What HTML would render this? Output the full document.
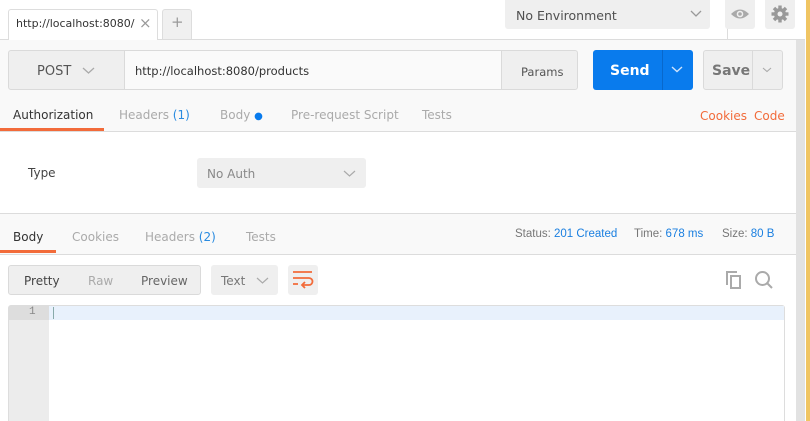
<!DOCTYPE html>
<html><head><style>
*{box-sizing:border-box;margin:0;padding:0}
html,body{width:810px;height:421px;overflow:hidden}
body{background:#fff;font-family:"DejaVu Sans","Liberation Sans",sans-serif;font-size:12px;color:#505050;position:relative}
.a{position:absolute}
.t{position:absolute;white-space:nowrap}
</style></head><body>
<div class="a" style="left:0;top:0;width:805px;height:40px;background:#fff;border-bottom:1px solid #dcdcdc"></div>
<div class="a" style="left:8px;top:9px;width:150px;height:32px;background:#fff;border:1px solid #ddd;border-bottom:none;border-radius:3px 3px 0 0"></div>
<div class="t" style="left:16px;top:17px;font-size:11px;color:#333">http://localhost:8080/</div>
<div class="t" style="left:139px;top:14px;font-size:15px;color:#999">×</div>
<div class="a" style="left:162px;top:9px;width:30px;height:30px;background:#f0f0f0;border:1px solid #ddd;border-bottom:none;border-radius:3px 3px 0 0"></div>
<div class="t" style="left:171px;top:13px;font-size:15px;color:#999">+</div>
<div class="a" style="left:727px;top:0;width:1px;height:40px;background:#ddd"></div>
<div class="a" style="left:505px;top:0;width:205px;height:29px;background:#efefef;border-radius:0 0 3px 3px"></div>
<div class="t" style="left:516px;top:8px;font-size:12.5px;color:#505050">No Environment</div>
<svg class="a" style="left:690px;top:10px" width="12" height="8"><path d="M1 1l5 5 5-5" fill="none" stroke="#999" stroke-width="1.3"/></svg>
<div class="a" style="left:725px;top:0;width:30px;height:29px;background:#efefef;border-radius:0 0 3px 3px"></div>
<svg class="a" style="left:730px;top:7px" width="20" height="14"><path d="M1 7Q10-2 19 7Q10 16 1 7z" fill="#aaa"/><circle cx="10" cy="7" r="3.3" fill="#efefef"/><circle cx="10" cy="7" r="1.8" fill="#aaa"/></svg>
<div class="a" style="left:765px;top:0;width:30px;height:29px;background:#efefef;border-radius:0 0 3px 3px"></div>
<svg class="a" style="left:770px;top:4px" width="20" height="20" viewBox="0 0 20 20"><g fill="#999"><circle cx="10" cy="10" r="6"/><rect x="8.3" y="1.5" width="3.4" height="17"/><rect x="1.5" y="8.3" width="17" height="3.4"/><rect x="8.3" y="1.5" width="3.4" height="17" transform="rotate(45 10 10)"/><rect x="8.3" y="1.5" width="3.4" height="17" transform="rotate(-45 10 10)"/></g><circle cx="10" cy="10" r="2.5" fill="#efefef"/></svg>
<div class="a" style="left:805px;top:0;width:5px;height:421px;background:#fff"></div>
<div class="a" style="left:806px;top:0;width:4px;height:421px;background:#f0c563"></div>
<div class="a" style="left:796px;top:40px;width:9px;height:381px;background:#e2e2e2"></div>
<div class="a" style="left:0;top:40px;width:796px;height:92px;background:#f9f9f9;border-bottom:1px solid #dcdcdc"></div>
<div class="a" style="left:8px;top:50px;width:570px;height:40px;background:#efefef;border:1px solid #dadada;border-radius:3px"></div>
<div class="a" style="left:124px;top:51px;width:1px;height:38px;background:#dadada"></div>
<div class="a" style="left:501px;top:51px;width:1px;height:38px;background:#dadada"></div>
<div class="t" style="left:37px;top:64px;font-size:13px;color:#555">POST</div>
<svg class="a" style="left:82px;top:67px" width="13" height="8"><path d="M1 1l5.5 5 5.5-5" fill="none" stroke="#aaa" stroke-width="1.3"/></svg>
<div class="a" style="left:125px;top:51px;width:376px;height:38px;background:#fafafa"></div>
<div class="t" style="left:135px;top:64px;font-size:11.5px;color:#333">http://localhost:8080/products</div>
<div class="t" style="left:521px;top:65px;font-size:11.5px;color:#555">Params</div>
<div class="a" style="left:593px;top:50px;width:100px;height:40px;background:#097bed;border-radius:3px"></div>
<div class="a" style="left:662px;top:50px;width:1px;height:40px;background:#0868cc"></div>
<div class="t" style="left:610px;top:63px;font-size:14px;font-weight:bold;color:#fff">Send</div>
<svg class="a" style="left:671px;top:66px" width="12" height="7"><path d="M1 1l5 4.5 5-4.5" fill="none" stroke="#cfe3fb" stroke-width="1.4"/></svg>
<div class="a" style="left:703px;top:50px;width:80px;height:40px;background:#efefef;border:1px solid #dadada;border-radius:3px"></div>
<div class="a" style="left:752px;top:51px;width:1px;height:38px;background:#dadada"></div>
<div class="t" style="left:712px;top:63px;font-size:14px;font-weight:bold;color:#777">Save</div>
<svg class="a" style="left:762px;top:67px" width="10" height="6"><path d="M1 1l4 3.5 4-3.5" fill="none" stroke="#aaa" stroke-width="1.1"/></svg>
<div class="t" style="left:13px;top:108px;color:#333">Authorization</div>
<div class="a" style="left:0;top:128px;width:104px;height:3px;background:#f26b3a"></div>
<div class="t" style="left:119px;top:108px;color:#aaa">Headers <span style="color:#2a8be0">(1)</span></div>
<div class="t" style="left:220px;top:108px;color:#aaa">Body <span style="color:#097bed;font-size:10px">●</span></div>
<div class="t" style="left:291px;top:108px;color:#aaa">Pre-request Script</div>
<div class="t" style="left:422px;top:108px;color:#aaa">Tests</div>
<div class="t" style="left:700px;top:109px;color:#f26b3a">Cookies</div>
<div class="t" style="left:754px;top:109px;color:#f26b3a">Code</div>
<div class="t" style="left:28px;top:166px;color:#444">Type</div>
<div class="a" style="left:197px;top:158px;width:169px;height:30px;background:#efefef;border-radius:3px"></div>
<div class="t" style="left:207px;top:167px;color:#888">No Auth</div>
<svg class="a" style="left:343px;top:170px" width="13" height="8"><path d="M1 1l5.5 5 5.5-5" fill="none" stroke="#aaa" stroke-width="1.2"/></svg>
<div class="a" style="left:0;top:213px;width:796px;height:42px;background:#f9f9f9;border-top:1px solid #dcdcdc;border-bottom:1px solid #dcdcdc"></div>
<div class="t" style="left:13px;top:230px;color:#333">Body</div>
<div class="a" style="left:0;top:250px;width:56px;height:3px;background:#f26b3a"></div>
<div class="t" style="left:72px;top:230px;color:#aaa">Cookies</div>
<div class="t" style="left:145px;top:230px;color:#aaa">Headers <span style="color:#2a8be0">(2)</span></div>
<div class="t" style="left:246px;top:230px;color:#aaa">Tests</div>
<div class="t" style="left:515px;top:228px;font-size:11.5px;font-family:'Liberation Sans',sans-serif;color:#777">Status: <span style="color:#1a7fe0">201 Created</span></div>
<div class="t" style="left:634px;top:228px;font-size:11.5px;font-family:'Liberation Sans',sans-serif;color:#777">Time: <span style="color:#1a7fe0">678 ms</span></div>
<div class="t" style="left:722px;top:228px;font-size:11.5px;font-family:'Liberation Sans',sans-serif;color:#777">Size: <span style="color:#1a7fe0">80 B</span></div>
<div class="a" style="left:8px;top:265px;width:193px;height:30px;background:#efefef;border:1px solid #dadada;border-radius:3px"></div>
<div class="t" style="left:24px;top:274px;color:#444">Pretty</div>
<div class="t" style="left:88px;top:274px;color:#aaa">Raw</div>
<div class="t" style="left:141px;top:274px;color:#666">Preview</div>
<div class="a" style="left:211px;top:265px;width:67px;height:30px;background:#efefef;border-radius:3px"></div>
<div class="t" style="left:221px;top:274px;color:#777">Text</div>
<svg class="a" style="left:256px;top:277px" width="13" height="8"><path d="M1 1l5.5 5 5.5-5" fill="none" stroke="#aaa" stroke-width="1.2"/></svg>
<div class="a" style="left:288px;top:265px;width:30px;height:30px;background:#efefef;border-radius:3px"></div>
<svg class="a" style="left:292px;top:270px" width="22" height="20"><g fill="none" stroke="#f26b3a" stroke-width="1.8"><path d="M1 2h19M1 8h16a3.5 3.5 0 0 1 0 7h-6M1 14h5"/><path d="M13 12l-3 3 3 3"/></g></svg>
<svg class="a" style="left:725px;top:270px" width="20" height="20"><g fill="none" stroke="#aaa" stroke-width="2"><path d="M2 15V2h10"/><rect x="6" y="6" width="9" height="12"/></g></svg>
<svg class="a" style="left:754px;top:270px" width="22" height="22"><g fill="none" stroke="#aaa" stroke-width="2"><circle cx="8.5" cy="8.5" r="6.5"/><path d="M13 13l5 5"/></g></svg>
<div class="a" style="left:8px;top:305px;width:777px;height:130px;border:1px solid #ddd;border-radius:3px;background:#fff"></div>
<div class="a" style="left:9px;top:306px;width:40px;height:128px;background:#ececec"></div>
<div class="a" style="left:9px;top:306px;width:40px;height:14px;background:#ddd"></div>
<div class="a" style="left:49px;top:306px;width:735px;height:14px;background:#e8f1fc"></div>
<div class="t" style="left:29px;top:306px;font-size:11px;color:#888;font-family:'Liberation Mono',monospace">1</div>
<div class="a" style="left:53px;top:307px;width:1px;height:12px;background:#8aa"></div>
</body></html>
